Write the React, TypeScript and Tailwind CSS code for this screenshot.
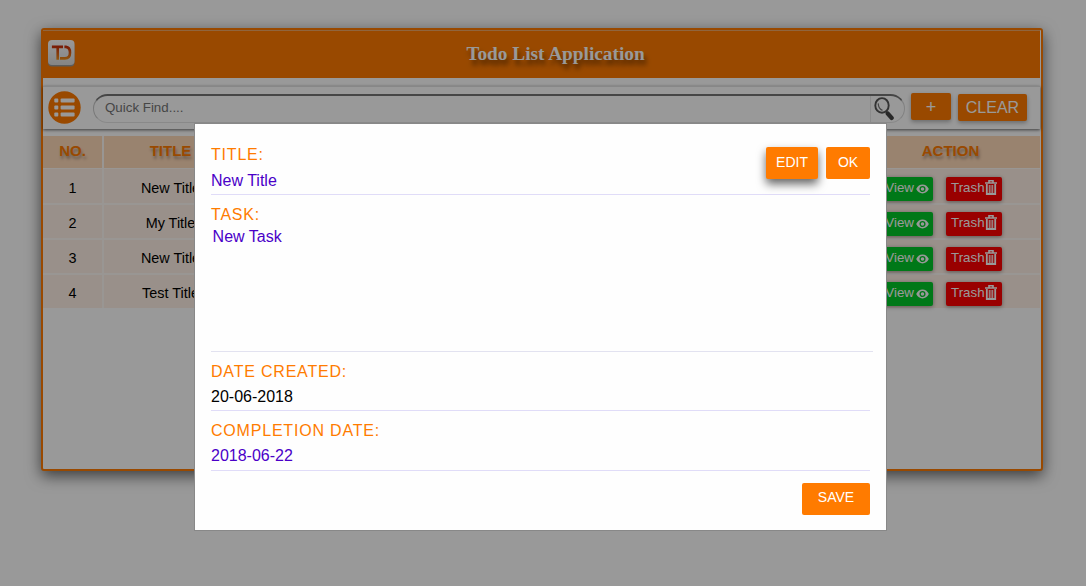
const rows = ["New Title", "My Title", "New Title", "Test Title"];

function Logo() {
  return (
    <svg width="28" height="28" viewBox="0 0 28 28">
      <defs>
        <linearGradient id="plate" x1="0" y1="0" x2="0" y2="1">
          <stop offset="0" stopColor="#ffffff" />
          <stop offset="1" stopColor="#dedede" />
        </linearGradient>
        <linearGradient id="ink" gradientUnits="userSpaceOnUse" x1="0" y1="6" x2="0" y2="21">
          <stop offset="0" stopColor="#c92b08" />
          <stop offset="1" stopColor="#f59a1b" />
        </linearGradient>
      </defs>
      <rect x="1" y="2" width="26.5" height="24.5" rx="4" fill="#999" />
      <rect x="1" y="0" width="26.5" height="25" rx="4" fill="url(#plate)" />
      <path d="M4.9 6.9H16M10.7 6.9V19.7M17.4 6.9H18.9Q23 7.3 23 12.7Q23 18.3 17.9 18.4H13" fill="none" stroke="url(#ink)" strokeWidth="2.6" />
    </svg>
  );
}

function ListIcon() {
  return (
    <svg width="33" height="33" viewBox="0 0 33 33">
      <circle cx="16.5" cy="16.5" r="16.2" fill="#ff7b00" />
      <g fill="#fff">
        <rect x="6.3" y="7.6" width="4" height="4" rx="1" />
        <rect x="6.3" y="14.6" width="4" height="4" rx="1" />
        <rect x="6.3" y="21.6" width="4" height="4" rx="1" />
        <rect x="12.6" y="7.6" width="14" height="4" rx="1" />
        <rect x="12.6" y="14.6" width="14" height="4" rx="1" />
        <rect x="12.6" y="21.6" width="14" height="4" rx="1" />
      </g>
    </svg>
  );
}

function SearchIcon() {
  return (
    <svg width="22" height="24" viewBox="0 0 22 24">
      <ellipse cx="8" cy="8.4" rx="6.7" ry="7.3" fill="none" stroke="#555" strokeWidth="1.9" />
      <path d="M4.2 6.4Q4.5 11.9 8.5 13.4" fill="none" stroke="#777" strokeWidth="1.2" />
      <path d="M12 14.4L14 16.4" stroke="#555" strokeWidth="2" />
      <path d="M13.8 16.6L17.6 20.9" stroke="#444" strokeWidth="4.4" strokeLinecap="round" />
    </svg>
  );
}

function EyeIcon() {
  return (
    <svg width="13" height="10" viewBox="0 0 13 10">
      <path d="M0.2 5Q2.5 0.6 6.5 0.6T12.8 5Q10.5 9.4 6.5 9.4T0.2 5Z" fill="#fff" />
      <circle cx="6.5" cy="5" r="2.4" fill="none" stroke="#00c828" strokeWidth="1.3" />
    </svg>
  );
}

function TrashIcon() {
  return (
    <svg width="12" height="15" viewBox="0 0 12 15">
      <path d="M4 2.4V0.8H8V2.4M0 3H12" fill="none" stroke="#fff" strokeWidth="1.6" />
      <path d="M1.8 4V14H10.2V4" fill="none" stroke="#fff" strokeWidth="1.8" />
      <path d="M4.3 5V13M6 5V13M7.7 5V13" stroke="#fff" strokeWidth="1" />
    </svg>
  );
}

function Header() {
  return (
    <header className="mr-px grid h-12 grid-cols-[28px_1fr_28px] border-t border-[#f0a868] bg-[#ff7b00] px-1">
      <div className="pt-[9px]"><Logo /></div>
      <h1 className="pt-3 pl-[28px] text-center font-['Liberation_Serif',serif] text-[19.3px] leading-[22px] font-bold text-white [text-shadow:2px_5px_5px_rgba(0,0,0,0.5)]">
        Todo List Application
      </h1>
      <div />
    </header>
  );
}

function Toolbar() {
  return (
    <div className="mt-2 mr-px flex h-[43px] items-start border-t border-[#e2e2e2] pl-[5px] shadow-[0_1px_3px_rgba(0,0,0,0.6)]">
      <div className="mt-1"><ListIcon /></div>
      <div className="mt-[7px] ml-3 flex h-[29px] w-[812px] rounded-[15px] border-t-2 border-r border-b border-l border-t-[#767676] border-r-[#d8d8d8] border-b-[#e5e5e5] border-l-[#c8c8c8] pl-[11px]">
        <span className="flex-1 pt-1 text-[13.33px] leading-[15px] text-[#757575]">Quick Find....</span>
        <div className="w-[34px] border-l border-[#e8e8e8] pt-px pl-[3px]"><SearchIcon /></div>
      </div>
      <button className="mt-[6px] ml-[6px] h-[27px] w-10 rounded-[2px] bg-[#ff7b00] text-[18px] leading-[26px] text-white shadow-[0_2px_4px_rgba(0,0,0,0.3)]">+</button>
      <button className="mt-[7px] ml-[7px] h-[27px] w-[69px] rounded-[2px] bg-[#ff7b00] text-[16px] leading-[26px] text-white shadow-[0_2px_4px_rgba(0,0,0,0.3)]">CLEAR</button>
    </div>
  );
}

function TaskTable() {
  const heading = "bg-[#ffdab9] pt-[6px] text-[15px] leading-[18px] font-bold text-[#ff7b00] [text-shadow:1px_3px_3px_rgba(0,0,0,0.3)]";
  return (
    <div className="mt-[7px] mr-px bg-[#fffaf6] text-center">
      <div className="grid h-8 grid-cols-[59px_133px_1fr_179px] gap-x-[2px]">
        <div className={heading}>NO.</div>
        <div className={heading}>TITLE</div>
        <div className={heading}>TASK</div>
        <div className={heading}>ACTION</div>
      </div>
      <div className="mt-px grid gap-y-[2px]">
        {rows.map((title, i) => (
          <div key={i} className="grid h-[33px] grid-cols-[59px_133px_1fr_179px] grid-rows-[33px] gap-x-[2px] text-[14.4px] leading-[36px] first:h-[34px] first:grid-rows-[34px] first:leading-[38px] *:bg-[#fff0e6]">
            <div>{i + 1}</div>
            <div>{title}</div>
            <div />
            <div className="flex items-end pb-[2px] pl-[15px] text-[13.33px] leading-[22px] text-white">
              <button className="flex h-6 w-[57px] items-start justify-end gap-[2px] rounded-[2px] bg-[#00c828] pr-1 shadow-[0_1px_4px_rgba(0,0,0,0.4)]">
                View<span className="pt-[7px]"><EyeIcon /></span>
              </button>
              <button className="ml-[13px] flex h-6 w-14 items-start rounded-[2px] bg-[#ff0000] pl-[5px] shadow-[0_1px_4px_rgba(0,0,0,0.4)]">
                Trash<span className="pt-[3px]"><TrashIcon /></span>
              </button>
            </div>
          </div>
        ))}
      </div>
    </div>
  );
}

function Modal() {
  const label = "h-[18px] text-[16px] leading-[18px] tracking-[0.8px] text-[#ff7b00]";
  const action = "h-8 rounded-[2px] bg-[#ff7b00] text-[14px] text-white";
  return (
    <div className="fixed inset-0 flex items-start bg-black/40 pt-[123px] pl-[194px]">
      <div role="dialog" className="h-[408px] w-[693px] border border-[#888] bg-[#fefefe] px-4 text-[16px] leading-[18px]">
        <div className="flex h-[71px] justify-between border-b border-[#e0dcf8] pt-[22px]">
          <div>
            <div className={label}>TITLE:</div>
            <div className="pt-2 text-[#4a00c8]">New Title</div>
          </div>
          <div className="flex gap-2 pt-px">
            <button className={`${action} w-[52px] pb-[2px] leading-[30px] shadow-[0_5px_10px_rgba(0,0,0,0.6)]`}>EDIT</button>
            <button className={`${action} w-11 pb-[2px] leading-[30px]`}>OK</button>
          </div>
        </div>
        <div className={`${label} mt-[11px]`}>TASK:</div>
        <div className="-mr-[3px] h-32 border-b border-[#e2e2f0] pt-1 pl-[1.6px] text-[#4a00c8]">New Task</div>
        <div className={`${label} mt-[11px]`}>DATE CREATED:</div>
        <div className="h-[30px] border-b border-[#e0dcf8] pt-[7px] text-black">20-06-2018</div>
        <div className={`${label} mt-[11px]`}>COMPLETION DATE:</div>
        <div className="h-[31px] border-b border-[#e0dcf8] pt-[7px] text-[#4a00c8]">2018-06-22</div>
        <div className="flex justify-end pt-3">
          <button className={`${action} w-[68px] pb-1 leading-[28px]`}>SAVE</button>
        </div>
      </div>
    </div>
  );
}

export default function App() {
  return (
    <div className="h-[586px] overflow-hidden bg-white pt-[28px] pl-[41px] font-['Liberation_Sans',Arial,sans-serif] text-black">
      <main className="h-[443px] w-[1002px] rounded-[3px] border-2 border-[#ff7b00] bg-white shadow-[0_5px_15px_rgba(0,0,0,0.6)]">
        <Header />
        <Toolbar />
        <TaskTable />
      </main>
      <Modal />
    </div>
  );
}
